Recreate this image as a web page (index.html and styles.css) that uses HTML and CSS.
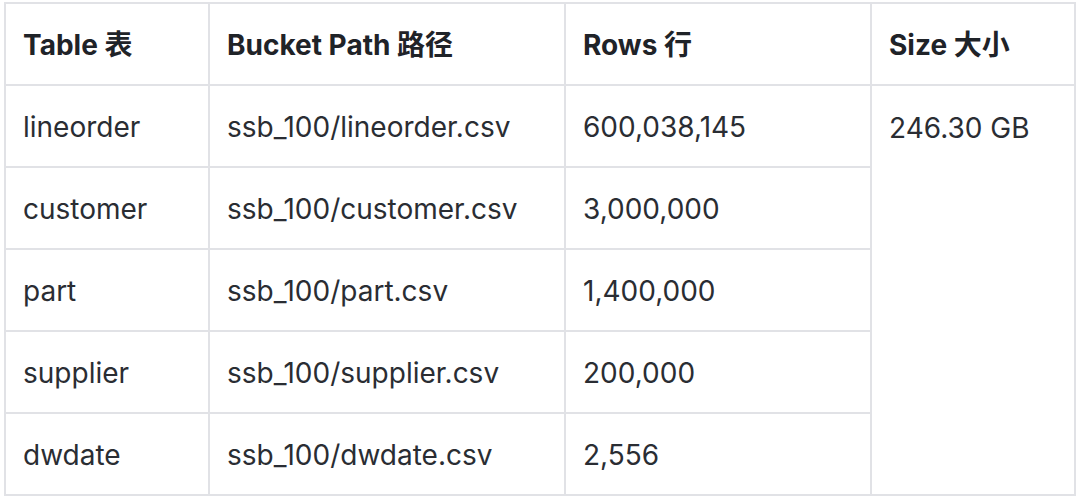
FILE: index.html
```html
<!DOCTYPE html>
<html lang="en">
<head>
<meta charset="utf-8">
<title>SSB tables</title>
<link rel="stylesheet" href="styles.css">
</head>
<body>
<table class="data">
  <colgroup>
    <col class="c1"><col class="c2"><col class="c3"><col class="c4">
  </colgroup>
  <thead>
    <tr><th>Table 表</th><th>Bucket Path 路径</th><th>Rows 行</th><th>Size 大小</th></tr>
  </thead>
  <tbody>
    <tr><td>lineorder</td><td>ssb_100/lineorder.csv</td><td>600,038,145</td><td class="size" rowspan="5">246.30 GB</td></tr>
    <tr><td>customer</td><td>ssb_100/customer.csv</td><td>3,000,000</td></tr>
    <tr><td>part</td><td>ssb_100/part.csv</td><td>1,400,000</td></tr>
    <tr><td>supplier</td><td>ssb_100/supplier.csv</td><td>200,000</td></tr>
    <tr><td>dwdate</td><td>ssb_100/dwdate.csv</td><td>2,556</td></tr>
  </tbody>
</table>
</body>
</html>
```
FILE: styles.css
```css
html, body {
  margin: 0;
  padding: 0;
  background: #ffffff;
}
body {
  padding: 2px 4px 0 4px;
  font-family: Inter, "Noto Sans CJK SC", sans-serif;
  color: #24292f;
}
.data {
  border-collapse: collapse;
  table-layout: fixed;
  width: 1070px;
}
.c1 { width: 204px; }
.c2 { width: 356px; }
.c3 { width: 306px; }
.c4 { width: 204px; }
.data th, .data td {
  border: 2px solid #e1e2e6;
  height: 82px;
  padding: 1px 17px 0 17px;
  text-align: left;
  vertical-align: middle;
  font-size: 28px;
  line-height: 34px;
  box-sizing: border-box;
}
.data th {
  font-weight: 700;
  color: #1f2328;
}
.data td {
  font-weight: 400;
  color: #2a2d33;
}
.data td.size {
  vertical-align: top;
  padding-top: 25px;
}
```
